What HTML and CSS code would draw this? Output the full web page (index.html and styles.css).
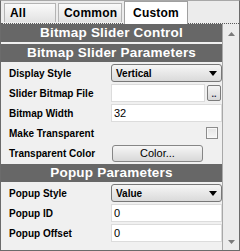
FILE: index.html
```html
<!DOCTYPE html>
<html>
<head>
<meta charset="utf-8">
<link rel="stylesheet" href="styles.css">
</head>
<body>
<div class="panel">
  <div class="tabs">
    <div class="tab tab-all">All</div>
    <div class="tab tab-common">Common</div>
    <div class="tab tab-custom active">Custom</div>
  </div>
  <div class="body">
    <div class="content">
      <div class="hdr hdr-top">Bitmap Slider Control</div>
      <div class="hdr hdr-sec">Bitmap Slider Parameters</div>
      <div class="row">
        <span class="label">Display Style</span>
        <div class="select"><span>Vertical</span><svg class="arrow" width="8" height="5" viewBox="0 0 8 5"><path d="M0 0H8L4 5Z" fill="#000"/></svg></div>
      </div>
      <div class="row">
        <span class="label">Slider Bitmap File</span>
        <div class="filebox"><div class="input"></div><div class="dots">..</div></div>
      </div>
      <div class="row">
        <span class="label">Bitmap Width</span>
        <div class="input">32</div>
      </div>
      <div class="row">
        <span class="label">Make Transparent</span>
        <div class="checkcell"><div class="check"></div></div>
      </div>
      <div class="row">
        <span class="label">Transparent Color</span>
        <div class="btncell"><div class="button">Color...</div></div>
      </div>
      <div class="hdr hdr-mid">Popup Parameters</div>
      <div class="row">
        <span class="label">Popup Style</span>
        <div class="select"><span>Value</span><svg class="arrow" width="8" height="5" viewBox="0 0 8 5"><path d="M0 0H8L4 5Z" fill="#000"/></svg></div>
      </div>
      <div class="row">
        <span class="label">Popup ID</span>
        <div class="input">0</div>
      </div>
      <div class="row">
        <span class="label">Popup Offset</span>
        <div class="input">0</div>
      </div>
    </div>
    <div class="scrollbar">
      <svg width="7" height="4" viewBox="0 0 7 4"><path d="M3.5 0L7 4H0Z" fill="#7a7a7a"/></svg>
      <svg width="7" height="4" viewBox="0 0 7 4"><path d="M0 0H7L3.5 4Z" fill="#7a7a7a"/></svg>
    </div>
  </div>
</div>
</body>
</html>
```
FILE: styles.css
```css
* { box-sizing: border-box; }
html, body { margin: 0; padding: 0; background: #f0f0f0; }
.panel {
  width: 240px;
  height: 251px;
  border: 1px solid #6b6b6b;
  border-top-color: #a8a8a8;
  background: #f0f0f0;
  font-family: "Liberation Sans", Arial, sans-serif;
  display: flex;
  flex-direction: column;
}
.tabs {
  height: 23px;
  flex: none;
  display: flex;
  align-items: flex-end;
  gap: 2px;
  padding-left: 3px;
  border-bottom: 1px dotted #5a5a5a;
  background: #ececec;
  position: relative;
}
.tab {
  height: 19px;
  margin-bottom: 1px;
  border: 1px solid #b4b4b4;
  border-bottom: none;
  background: linear-gradient(#fafafa, #e2e2e2);
  font-size: 12px;
  font-weight: bold;
  color: #000;
  line-height: 19px;
  padding: 0 5px;
  letter-spacing: 0.2px;
}
.tab-all { width: 52px; }
.tab-common { width: 64px; }
.tab-custom { width: 64px; text-align: center; }
.tab.active {
  height: 23px;
  margin-bottom: -1px;
  background: #ffffff;
  border-color: #a0a0a0;
  line-height: 22px;
  position: relative;
  z-index: 1;
}
.body {
  flex: 1;
  display: flex;
  min-height: 0;
}
.content {
  width: 221px;
  flex: none;
  display: flex;
  flex-direction: column;
}
.hdr {
  height: 18px;
  background: #676767;
  color: #fff;
  font-weight: bold;
  font-size: 13.5px;
  letter-spacing: 0.2px;
  line-height: 18px;
  text-align: center;
}
.hdr-top { margin-bottom: 2px; }
.hdr-sec { margin-bottom: 1px; }
.hdr-mid { margin: 1px 0; }
.row {
  height: 20px;
  display: grid;
  grid-template-columns: 102px 1fr;
  align-items: center;
  padding-left: 8px;
}
.label {
  font-size: 10px;
  font-weight: bold;
  color: #000;
  white-space: nowrap;
}
.select {
  height: 18px;
  border: 1px solid #787878;
  border-radius: 3px;
  background: linear-gradient(#f6f6f6, #dadada);
  display: flex;
  align-items: center;
  justify-content: space-between;
  padding: 0 4px 0 4px;
  font-size: 10px;
  font-weight: bold;
}
.arrow { display: block; }
.input {
  height: 18px;
  background: #fff;
  border: 1px solid #dcdcdc;
  font-size: 11px;
  line-height: 16px;
  padding-left: 2px;
  color: #000;
}
.filebox {
  display: flex;
  align-items: center;
  gap: 2px;
}
.filebox .input { width: 94px; }
.dots {
  width: 14px;
  height: 16px;
  border: 1px solid #7c7c7c;
  border-radius: 2px;
  background: linear-gradient(#f4f4f4, #d8d8d8);
  font-size: 9px;
  font-weight: bold;
  text-align: center;
  line-height: 16px;
  color: #202040;
}
.checkcell {
  display: flex;
  justify-content: flex-end;
  padding-right: 4px;
}
.check {
  width: 12px;
  height: 12px;
  border: 1px solid #8c8c8c;
  background: linear-gradient(#e4e4e4, #f6f6f6);
  box-shadow: inset 0 0 0 1px #f8f8f8;
}
.btncell { padding-left: 1px; }
.button {
  width: 91px;
  height: 17px;
  border: 1px solid #868686;
  border-radius: 3px;
  background: linear-gradient(#f6f6f6, #d8d8d8);
  font-size: 11px;
  text-align: center;
  line-height: 15px;
  color: #000;
}
.scrollbar {
  flex: 1;
  border-left: 1px solid #a8a8a8;
  background: #ececec;
  display: flex;
  flex-direction: column;
  justify-content: space-between;
  align-items: center;
  padding: 8px 0 6px;
}
.scrollbar svg { display: block; }
```
